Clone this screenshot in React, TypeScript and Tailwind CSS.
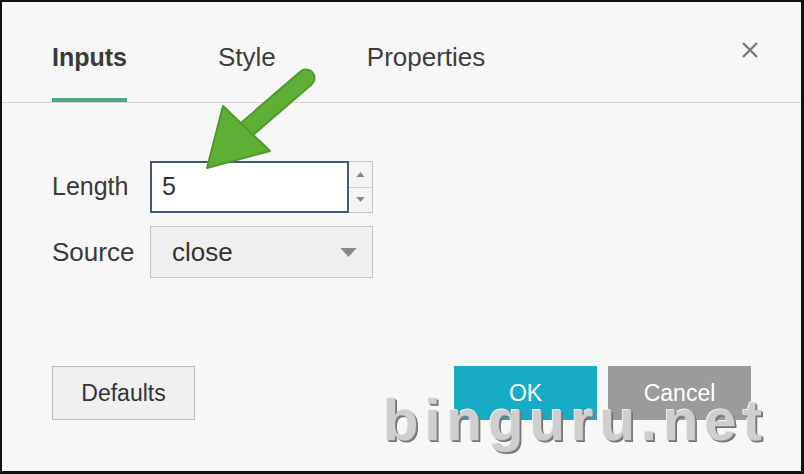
import React from 'react';

const tabs = [
  { label: 'Inputs', active: true },
  { label: 'Style', active: false },
  { label: 'Properties', active: false },
];

export default function App() {
  return (
    <div className="relative w-[804px] h-[474px] overflow-hidden border-t-2 border-l-2 border-r-[3px] border-b-[3px] border-[#111] bg-[#f7f7f7] font-['Liberation_Sans',Arial,sans-serif] text-[#333]">
      {/* header / tabs */}
      <div className="flex h-[101px] border-b border-[#d4d4d4] pl-[50px]">
        <div className="flex gap-[91px]">
          {tabs.map((t) => (
            <div key={t.label} className="flex flex-col pt-[40px]">
              <span className={`leading-[30px] ${t.active ? 'text-[25px] font-bold text-[#3a3a3a]' : 'text-[26px] text-[#3d3d3d]'}`}>
                {t.label}
              </span>
              <div className={`mt-auto h-[4px] ${t.active ? 'bg-[#4fa97f]' : 'bg-transparent'}`} />
            </div>
          ))}
        </div>
        <button className="ml-auto mr-[42px] mt-[39px] self-start w-[18px] h-[18px]">
          <svg viewBox="0 0 18 18" className="w-[18px] h-[18px]">
            <path d="M2 2 L16 16 M16 2 L2 16" stroke="#7a7a7a" strokeWidth="2.4" />
          </svg>
        </button>
      </div>

      {/* form */}
      <div className="flex flex-col gap-[13px] pl-[50px] pt-[58px]">
        <div className="flex items-center">
          <span className="w-[98px] text-[25px] text-[#3a3a3a]">Length</span>
          <div className="flex h-[52px]">
            <div className="w-[199px] border-2 border-[#3f5b79] bg-white flex items-center pl-[10px] text-[25px] text-[#333]">5</div>
            <div className="w-[24px] flex flex-col border border-l-0 border-[#c4c4c4] bg-[#f4f4f4]">
              <div className="flex-1 flex items-center justify-center border-b border-[#d0d0d0]">
                <svg viewBox="0 0 10 6" className="w-[9px] h-[5px]"><path d="M0 6 L5 0 L10 6 Z" fill="#888" /></svg>
              </div>
              <div className="flex-1 flex items-center justify-center">
                <svg viewBox="0 0 10 6" className="w-[9px] h-[5px]"><path d="M0 0 L5 6 L10 0 Z" fill="#888" /></svg>
              </div>
            </div>
          </div>
        </div>
        <div className="flex items-center">
          <span className="w-[98px] text-[26px] text-[#3a3a3a]">Source</span>
          <div className="w-[223px] h-[52px] border border-[#c4c4c4] bg-[#efefef] flex items-center pl-[21px] pr-[15px]">
            <span className="text-[26px] text-[#333]">close</span>
            <svg viewBox="0 0 18 10" className="ml-auto w-[17px] h-[9px]"><path d="M0 0 L18 0 L9 10 Z" fill="#8a8a8a" /></svg>
          </div>
        </div>
      </div>

      {/* footer buttons */}
      <div className="flex items-center pl-[50px] pr-[50px] pt-[88px]">
        <button className="w-[143px] h-[54px] border border-[#bdbdbd] bg-[#f0f0f0] text-[23px] text-[#333]">Defaults</button>
        <div className="ml-auto flex gap-[11px]">
          <button className="w-[143px] h-[54px] bg-[#18abc6] text-[23px] text-white">OK</button>
          <button className="w-[143px] h-[54px] bg-[#9b9b9b] text-[23px] text-white">Cancel</button>
        </div>
      </div>

      {/* green annotation arrow */}
      <svg className="absolute left-0 top-0 pointer-events-none" width="804" height="474">
        <line x1="304" y1="76" x2="238" y2="133" stroke="#4f9a2a" strokeWidth="19" strokeLinecap="round" />
        <line x1="304" y1="76" x2="238" y2="133" stroke="#5fae35" strokeWidth="15" strokeLinecap="round" />
        <polygon points="205,166 221,104 268,149" fill="#5fae35" stroke="#4f9a2a" strokeWidth="2" strokeLinejoin="round" />
      </svg>

      {/* watermark */}
      <div className="absolute left-[381px] top-[389px] text-[58px] font-bold tracking-[6px] leading-none text-[#cfcfcf] [text-shadow:1px_1px_0_#8a8a8a,2px_2px_0_#6f6f6f,-1px_-1px_0_#eeeeee] pointer-events-none">
        binguru.net
      </div>
    </div>
  );
}
